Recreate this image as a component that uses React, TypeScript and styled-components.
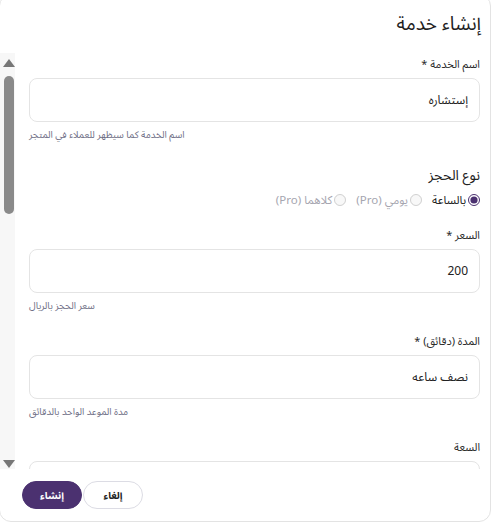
import React from 'react';
import styled, { createGlobalStyle } from 'styled-components';

const GlobalStyle = createGlobalStyle`
  html, body {
    margin: 0;
    padding: 0;
    background: #fff;
    overflow: hidden;
  }
  body {
    font-family: 'Noto Sans Arabic', 'Noto Sans', 'DejaVu Sans', sans-serif;
  }
`;

const Dialog = styled.div`
  direction: rtl;
  width: 492px;
  height: 528px;
  margin: -6px 0 0 -1px;
  box-sizing: border-box;
  background: #fff;
  border: 1px solid #e3e3e3;
  border-radius: 12px;
  display: flex;
  flex-direction: column;
  overflow: hidden;
`;

const Title = styled.h2`
  margin: 0;
  padding: 17px 9px 0 0;
  height: 58px;
  box-sizing: border-box;
  font-size: 19px;
  line-height: 24px;
  font-weight: 400;
  color: #1f1f1f;
`;

const Body = styled.div`
  flex: 1;
  min-height: 0;
  display: flex;
`;

const Content = styled.div`
  flex: 1;
  overflow: hidden;
  padding: 4px 10px 0 14px;
`;

const ScrollTrack = styled.div`
  width: 15px;
  flex-shrink: 0;
  background: #f7f7f7;
  display: flex;
  flex-direction: column;
  align-items: center;
  padding: 6px 0 0 2px;
  box-sizing: border-box;
`;

const Arrow = styled.div<{ $down?: boolean }>`
  width: 0;
  height: 0;
  border-left: 6px solid transparent;
  border-right: 6px solid transparent;
  ${p =>
    p.$down
      ? 'border-top: 8px solid #777; margin-top: auto; margin-bottom: 1px;'
      : 'border-bottom: 8px solid #777;'}
`;

const Thumb = styled.div`
  width: 10px;
  height: 138px;
  margin-top: 9px;
  border-radius: 5px;
  background: #8a8a8a;
`;

const Group = styled.div`
  display: flex;
  flex-direction: column;
  margin-bottom: 21px;
`;

const Label = styled.label`
  font-size: 11px;
  color: #2b2b2b;
  line-height: 16px;
  margin-bottom: 5px;
`;

const SectionTitle = styled.div`
  font-size: 14px;
  color: #222;
  line-height: 20px;
  margin: 3px 0 7px;
`;

const Input = styled.input`
  height: 44px;
  box-sizing: border-box;
  border: 1px solid #e4e4e4;
  border-radius: 8px;
  padding: 0 11px;
  font-family: inherit;
  font-size: 12px;
  color: #222;
  background: #fff;
  outline: none;
`;

const TextArea = styled.textarea`
  height: 110px;
  box-sizing: border-box;
  border: 1px solid #e4e4e4;
  border-radius: 8px;
  padding: 10px 11px;
  font-family: inherit;
  font-size: 12px;
  color: #222;
  resize: none;
  outline: none;
`;

const Helper = styled.div`
  text-align: left;
  font-size: 9.6px;
  color: #6f6f86;
  line-height: 14px;
  margin-top: 6px;
`;

const RadioRow = styled.div`
  display: flex;
  gap: 10px;
`;

const RadioOption = styled.label<{ $disabled?: boolean }>`
  display: flex;
  align-items: center;
  gap: 2px;
  font-size: 11.5px;
  line-height: 14px;
  color: ${p => (p.$disabled ? '#a6a6b0' : '#222')};

  input {
    margin: 0;
    width: 12px;
    height: 12px;
    accent-color: #4b3170;
  }
`;

const Footer = styled.div`
  height: 52px;
  display: flex;
  justify-content: flex-end;
  align-items: flex-start;
  padding: 12px 22px 0;
  box-sizing: border-box;
  gap: 1px;
`;

const Button = styled.button<{ $primary?: boolean }>`
  height: 28px;
  width: 60px;
  border-radius: 14px;
  font-family: inherit;
  font-size: 10px;
  font-weight: 700;
  cursor: pointer;
  border: 1px solid ${p => (p.$primary ? '#4b3170' : '#dcdce4')};
  background: ${p => (p.$primary ? '#4b3170' : '#fff')};
  color: ${p => (p.$primary ? '#fff' : '#222')};
`;

const App = () => {
  return (
    <>
      <GlobalStyle />
      <Dialog>
        <Title>إنشاء خدمة</Title>
        <Body>
          <Content>
            <Group>
              <Label>اسم الخدمة *</Label>
              <Input defaultValue="إستشاره" />
              <Helper>اسم الخدمة كما سيظهر للعملاء في المتجر</Helper>
            </Group>
            <Group>
              <SectionTitle>نوع الحجز</SectionTitle>
              <RadioRow>
                <RadioOption>
                  <input type="radio" name="kind" defaultChecked />
                  بالساعة
                </RadioOption>
                <RadioOption $disabled>
                  <input type="radio" name="kind" disabled />
                  يومي (Pro)
                </RadioOption>
                <RadioOption $disabled>
                  <input type="radio" name="kind" disabled />
                  كلاهما (Pro)
                </RadioOption>
              </RadioRow>
            </Group>
            <Group>
              <Label>السعر *</Label>
              <Input defaultValue="200" />
              <Helper>سعر الحجز بالريال</Helper>
            </Group>
            <Group>
              <Label>المدة (دقائق) *</Label>
              <Input defaultValue="نصف ساعه" />
              <Helper>مدة الموعد الواحد بالدقائق</Helper>
            </Group>
            <Group>
              <Label>السعة</Label>
              <Input defaultValue="1" />
              <Helper>عدد العملاء في الموعد الواحد</Helper>
            </Group>
            <Group>
              <Label>الوصف</Label>
              <TextArea />
            </Group>
          </Content>
          <ScrollTrack>
            <Arrow />
            <Thumb />
            <Arrow $down />
          </ScrollTrack>
        </Body>
        <Footer>
          <Button>إلغاء</Button>
          <Button $primary>إنشاء</Button>
        </Footer>
      </Dialog>
    </>
  );
};

export default App;
